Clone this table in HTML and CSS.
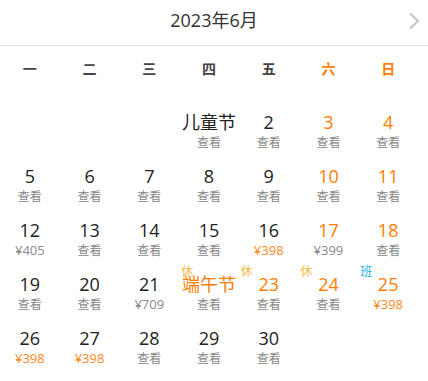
FILE: index.html
```html
<!DOCTYPE html>
<html lang="zh-CN">
<head>
<meta charset="utf-8">
<title>2023年6月</title>
<link rel="stylesheet" href="styles.css">
</head>
<body>
<div class="cal">
  <header class="cal-head">
    <span></span>
    <h1 class="cal-title">2023年6月</h1>
    <svg class="cal-next" width="12" height="18" viewBox="0 0 12 18"><path d="M2 1.5 L10 9 L2 16.5" fill="none" stroke="#c6c6c6" stroke-width="2.2"/></svg>
  </header>
  <div class="week">
    <span>一</span><span>二</span><span>三</span><span>四</span><span>五</span><span class="wk">六</span><span class="wk">日</span>
  </div>
  <div class="days">
    <div class="day empty"></div>
    <div class="day empty"></div>
    <div class="day empty"></div>
    <div class="day"><span class="num">儿童节</span><span class="sub">查看</span></div>
    <div class="day"><span class="num">2</span><span class="sub">查看</span></div>
    <div class="day wkd"><span class="num">3</span><span class="sub">查看</span></div>
    <div class="day wkd"><span class="num">4</span><span class="sub">查看</span></div>

    <div class="day"><span class="num">5</span><span class="sub">查看</span></div>
    <div class="day"><span class="num">6</span><span class="sub">查看</span></div>
    <div class="day"><span class="num">7</span><span class="sub">查看</span></div>
    <div class="day"><span class="num">8</span><span class="sub">查看</span></div>
    <div class="day"><span class="num">9</span><span class="sub">查看</span></div>
    <div class="day wkd"><span class="num">10</span><span class="sub">查看</span></div>
    <div class="day wkd"><span class="num">11</span><span class="sub">查看</span></div>

    <div class="day"><span class="num">12</span><span class="sub price">¥405</span></div>
    <div class="day"><span class="num">13</span><span class="sub">查看</span></div>
    <div class="day"><span class="num">14</span><span class="sub">查看</span></div>
    <div class="day"><span class="num">15</span><span class="sub">查看</span></div>
    <div class="day"><span class="num">16</span><span class="sub price hot">¥398</span></div>
    <div class="day wkd"><span class="num">17</span><span class="sub price">¥399</span></div>
    <div class="day wkd"><span class="num">18</span><span class="sub">查看</span></div>

    <div class="day"><span class="num">19</span><span class="sub">查看</span></div>
    <div class="day"><span class="num">20</span><span class="sub">查看</span></div>
    <div class="day"><span class="num">21</span><span class="sub price">¥709</span></div>
    <div class="day wkd"><span class="tag rest">休</span><span class="num">端午节</span><span class="sub">查看</span></div>
    <div class="day wkd"><span class="tag rest">休</span><span class="num">23</span><span class="sub">查看</span></div>
    <div class="day wkd"><span class="tag rest">休</span><span class="num">24</span><span class="sub">查看</span></div>
    <div class="day wkd"><span class="tag work">班</span><span class="num">25</span><span class="sub price hot">¥398</span></div>

    <div class="day"><span class="num">26</span><span class="sub price hot">¥398</span></div>
    <div class="day"><span class="num">27</span><span class="sub price hot">¥398</span></div>
    <div class="day"><span class="num">28</span><span class="sub">查看</span></div>
    <div class="day"><span class="num">29</span><span class="sub">查看</span></div>
    <div class="day"><span class="num">30</span><span class="sub">查看</span></div>
  </div>
</div>
</body>
</html>
```
FILE: styles.css
```css
* { box-sizing: border-box; }
html, body {
  margin: 0;
  padding: 0;
  background: #fff;
}
body {
  font-family: "Open Sans", "Noto Sans CJK SC", sans-serif;
  color: #222;
}
.cal { width: 428px; }
.cal-head {
  height: 46px;
  border-bottom: 1px solid #e2e2e2;
  display: grid;
  grid-template-columns: 1fr auto 1fr;
  align-items: center;
  padding-bottom: 6px;
}
.cal-title {
  margin: 0;
  font-size: 18px;
  font-weight: normal;
  color: #333;
  line-height: 24px;
}
.cal-next {
  justify-self: end;
  margin-right: 8px;
  margin-top: 3px;
}
.week {
  width: 418px;
  height: 42px;
  display: grid;
  grid-template-columns: repeat(7, 1fr);
  align-items: center;
  text-align: center;
  font-family: "Noto Sans CJK SC", sans-serif;
  font-size: 14px;
  font-weight: bold;
  color: #444;
  padding-top: 2px;
}
.week .wk { color: #ff7d00; }
.days {
  width: 418px;
  display: grid;
  grid-template-columns: repeat(7, 1fr);
  grid-auto-rows: 54px;
  padding-top: 24px;
}
.day {
  position: relative;
  display: flex;
  flex-direction: column;
  align-items: center;
}
.num {
  font-size: 18px;
  line-height: 21px;
  height: 21px;
  color: #222;
}
.wkd .num { color: #ff7d00; }
.sub {
  font-size: 12px;
  line-height: 18px;
  color: #888;
  font-family: "Noto Sans CJK SC", sans-serif;
}
.price {
  font-family: "Open Sans", sans-serif;
  font-size: 13px;
  color: #8a8a8a;
}
.price.hot { color: #ff8a1f; }
.tag {
  position: absolute;
  left: 2px;
  top: -10px;
  font-size: 12px;
  line-height: 14px;
  font-family: "Noto Sans CJK SC", sans-serif;
}
.tag.rest { color: #f6b94c; }
.tag.work { color: #1eb1d8; }
```
